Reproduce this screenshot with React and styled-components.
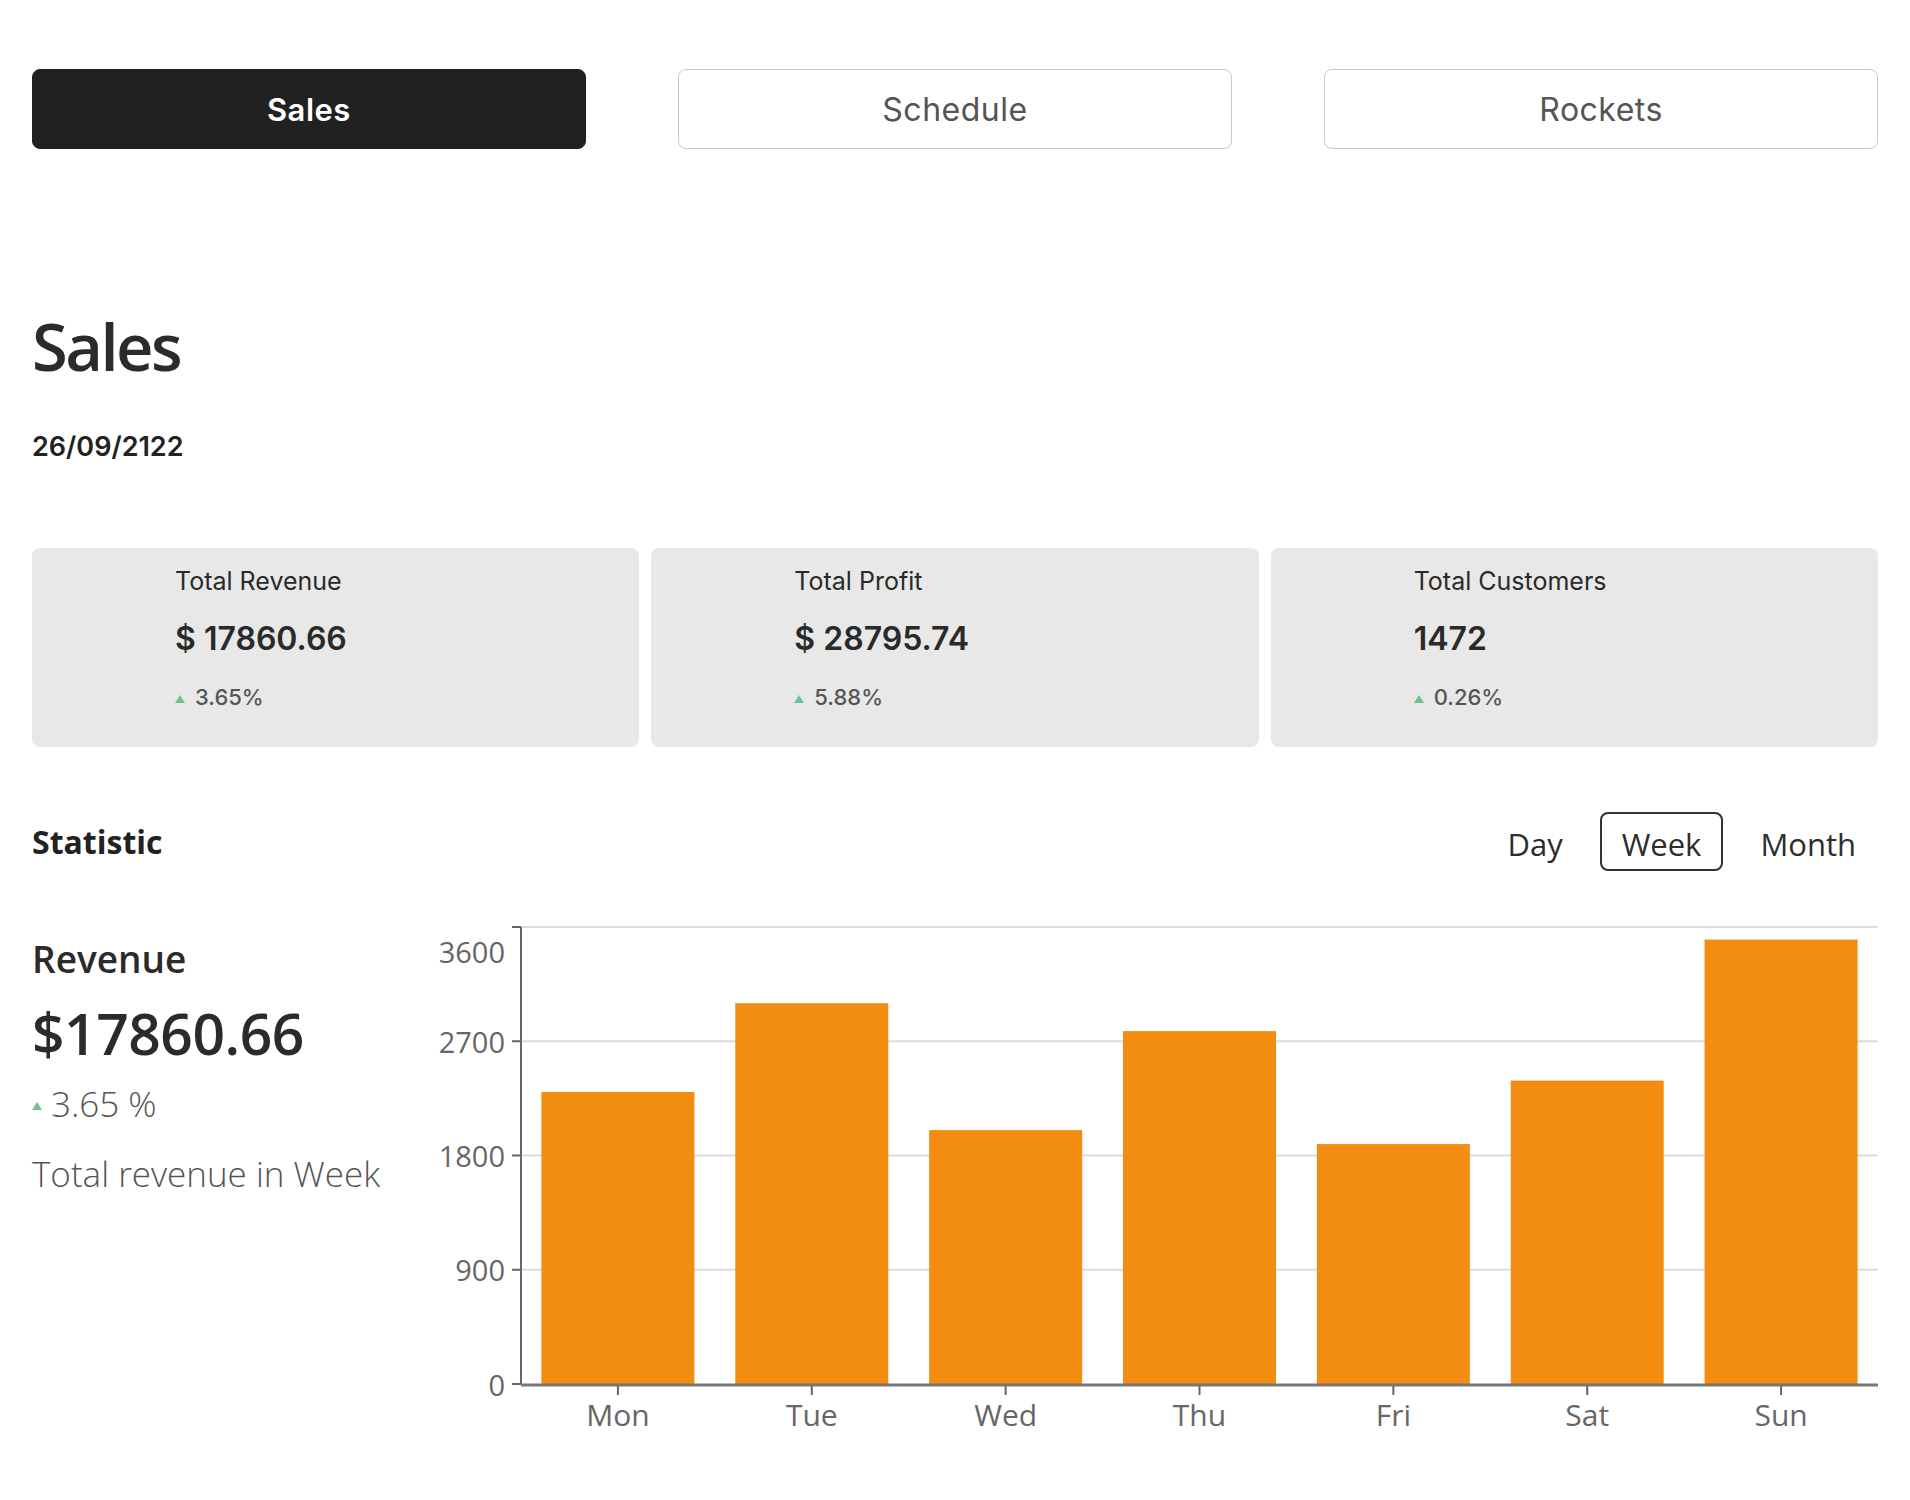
import React from "react";
import styled, { createGlobalStyle } from "styled-components";

const GlobalStyle = createGlobalStyle`
  html, body { margin: 0; padding: 0; background: #ffffff; }
  body { font-family: "Open Sans", "Noto Sans", sans-serif; color: #333; }
  * { box-sizing: border-box; }
`;

const MONT = `"Inter", "Noto Sans", sans-serif`;
const SEGOE = `"Open Sans", "Noto Sans", sans-serif`;

const Page = styled.div`
  padding: 69px 32px 60px;
`;

const TabBar = styled.nav`
  display: flex;
  justify-content: space-between;
`;

const TabButton = styled.button`
  width: 30%;
  height: 80px;
  border-radius: 8px;
  border: 1.5px solid ${(p) => (p.$active ? "#212121" : "#c8c8c8")};
  background: ${(p) => (p.$active ? "#212121" : "#ffffff")};
  color: ${(p) => (p.$active ? "#ffffff" : "#555555")};
  font-family: ${MONT};
  font-size: ${(p) => (p.$active ? 31 : 32)}px;
  font-weight: ${(p) => (p.$active ? 600 : 400)};
  letter-spacing: 0.5px;
  cursor: pointer;
`;

const Title = styled.h1`
  margin: 165px 0 0;
  font-family: ${SEGOE};
  font-size: 65px;
  line-height: 1;
  font-weight: 600;
  letter-spacing: -2.5px;
  color: #2b2b2b;
`;

const DateText = styled.div`
  margin-top: 54px;
  font-family: ${MONT};
  font-size: 27px;
  line-height: 1;
  font-weight: 600;
  color: #222;
`;

const CardRow = styled.section`
  margin-top: 88px;
  display: grid;
  grid-template-columns: repeat(3, 1fr);
  gap: 12px;
`;

const Card = styled.div`
  height: 199px;
  background: #e8e8e8;
  border-radius: 8px;
  padding: 18px 0 0 143px;
  display: flex;
  flex-direction: column;
  font-family: ${MONT};
`;

const CardTitle = styled.div`
  font-size: 25px;
  line-height: 30px;
  color: #2a2a2a;
  font-weight: 400;
`;

const CardValue = styled.div`
  margin-top: 24px;
  font-size: 32px;
  line-height: 38px;
  font-weight: 600;
  color: #2a2a2a;
`;

const Change = styled.div`
  display: flex;
  align-items: center;
  gap: ${(p) => (p.$big ? 9 : 10)}px;
  margin-top: ${(p) => (p.$big ? 14 : 26)}px;
  font-size: ${(p) => (p.$big ? 35 : 22)}px;
  line-height: ${(p) => (p.$big ? 44 : 26)}px;
  font-weight: ${(p) => (p.$big ? 300 : 500)};
  color: #555;
`;

const UpArrow = styled.span`
  width: 0;
  height: 0;
  border-left: 5px solid transparent;
  border-right: 5px solid transparent;
  border-bottom: 8px solid #6cc391;
  margin-top: 4px;
`;

const StatHeader = styled.div`
  margin-top: 65px;
  height: 59px;
  display: flex;
  align-items: center;
  justify-content: space-between;
`;

const StatTitle = styled.h2`
  margin: 0;
  font-family: ${SEGOE};
  font-size: 32px;
  font-weight: 700;
  color: #222;
`;

const RangeGroup = styled.div`
  display: flex;
  gap: 15px;
  height: 100%;
`;

const RangeButton = styled.button`
  height: 100%;
  padding: 4px 20px 0;
  border-radius: 8px;
  border: 2px solid ${(p) => (p.$active ? "#333" : "transparent")};
  background: transparent;
  font-family: ${SEGOE};
  font-size: 31px;
  color: #2d2d2d;
  cursor: pointer;
`;

const StatBody = styled.div`
  margin-top: 39px;
  display: flex;
`;

const RevenueInfo = styled.div`
  width: 388px;
  padding-top: 27px;
  font-family: ${SEGOE};
`;

const RevenueLabel = styled.div`
  font-size: 37px;
  line-height: 43px;
  font-weight: 600;
  color: #2b2b2b;
`;

const RevenueValue = styled.div`
  margin-top: 18px;
  font-size: 57px;
  line-height: 70px;
  font-weight: 600;
  letter-spacing: -0.5px;
  color: #2b2b2b;
`;

const RevenueNote = styled.div`
  margin-top: 28px;
  font-size: 35px;
  line-height: 40px;
  font-weight: 300;
  color: #555;
`;

const ChartBox = styled.div`
  flex: 1;
  display: flex;
`;

const data = [
  { day: "Mon", value: 2300 },
  { day: "Tue", value: 3000 },
  { day: "Wed", value: 2000 },
  { day: "Thu", value: 2780 },
  { day: "Fri", value: 1890 },
  { day: "Sat", value: 2390 },
  { day: "Sun", value: 3500.66 },
];

function BarChart() {
  const W = 1458;
  const H = 530;
  const axisX = 101;
  const right = 1458;
  const top = 17;
  const zero = 474;
  const max = 3600;
  const y = (v) => zero - (v / max) * (zero - top);
  const band = (right - axisX) / data.length;
  const barW = 153;
  const ticks = [0, 900, 1800, 2700, 3600];
  const font = `"Open Sans", "Noto Sans", sans-serif`;
  return (
    <svg width={W} height={H} viewBox={`0 0 ${W} ${H}`}>
      {ticks.slice(1).map((t) => (
        <line key={`g${t}`} x1={axisX} x2={right} y1={y(t)} y2={y(t)} stroke="#dcdcdc" strokeWidth="2" />
      ))}
      {data.map((d, i) => {
        const x = axisX + band * i + (band - barW) / 2;
        return <rect key={d.day} x={x} y={y(d.value)} width={barW} height={zero - y(d.value)} fill="#f28d12" />;
      })}
      <line x1={axisX} x2={axisX} y1={top} y2={zero} stroke="#666" strokeWidth="2" />
      <line x1={axisX} x2={right} y1={zero + 1} y2={zero + 1} stroke="#777" strokeWidth="3" />
      {ticks.map((t) => (
        <g key={`t${t}`}>
          <line x1={axisX - 9} x2={axisX} y1={y(t)} y2={y(t)} stroke="#666" strokeWidth="2" />
          <text
            x={axisX - 16}
            y={t === max ? y(t) + 24 : y(t)}
            textAnchor="end"
            dominantBaseline="central"
            fontFamily={font}
            fontSize="29"
            fill="#666"
          >
            {t}
          </text>
        </g>
      ))}
      {data.map((d, i) => {
        const cx = axisX + band * i + band / 2;
        return (
          <g key={`x${d.day}`}>
            <line x1={cx} x2={cx} y1={zero + 2} y2={zero + 11} stroke="#666" strokeWidth="2" />
            <text x={cx} y={zero + 30} textAnchor="middle" dominantBaseline="central" fontFamily={font} fontSize="30" fill="#666">
              {d.day}
            </text>
          </g>
        );
      })}
    </svg>
  );
}

const cards = [
  { title: "Total Revenue", value: "$ 17860.66", change: "3.65%" },
  { title: "Total Profit", value: "$ 28795.74", change: "5.88%" },
  { title: "Total Customers", value: "1472", change: "0.26%" },
];

export default function App() {
  return (
    <>
      <GlobalStyle />
      <Page>
        <TabBar>
          <TabButton $active>Sales</TabButton>
          <TabButton>Schedule</TabButton>
          <TabButton>Rockets</TabButton>
        </TabBar>

        <Title>Sales</Title>
        <DateText>26/09/2122</DateText>

        <CardRow>
          {cards.map((c) => (
            <Card key={c.title}>
              <CardTitle>{c.title}</CardTitle>
              <CardValue>{c.value}</CardValue>
              <Change>
                <UpArrow />
                {c.change}
              </Change>
            </Card>
          ))}
        </CardRow>

        <StatHeader>
          <StatTitle>Statistic</StatTitle>
          <RangeGroup>
            <RangeButton>Day</RangeButton>
            <RangeButton $active>Week</RangeButton>
            <RangeButton>Month</RangeButton>
          </RangeGroup>
        </StatHeader>

        <StatBody>
          <RevenueInfo>
            <RevenueLabel>Revenue</RevenueLabel>
            <RevenueValue>$17860.66</RevenueValue>
            <Change $big>
              <UpArrow />
              3.65 %
            </Change>
            <RevenueNote>Total revenue in Week</RevenueNote>
          </RevenueInfo>
          <ChartBox>
            <BarChart />
          </ChartBox>
        </StatBody>
      </Page>
    </>
  );
}
